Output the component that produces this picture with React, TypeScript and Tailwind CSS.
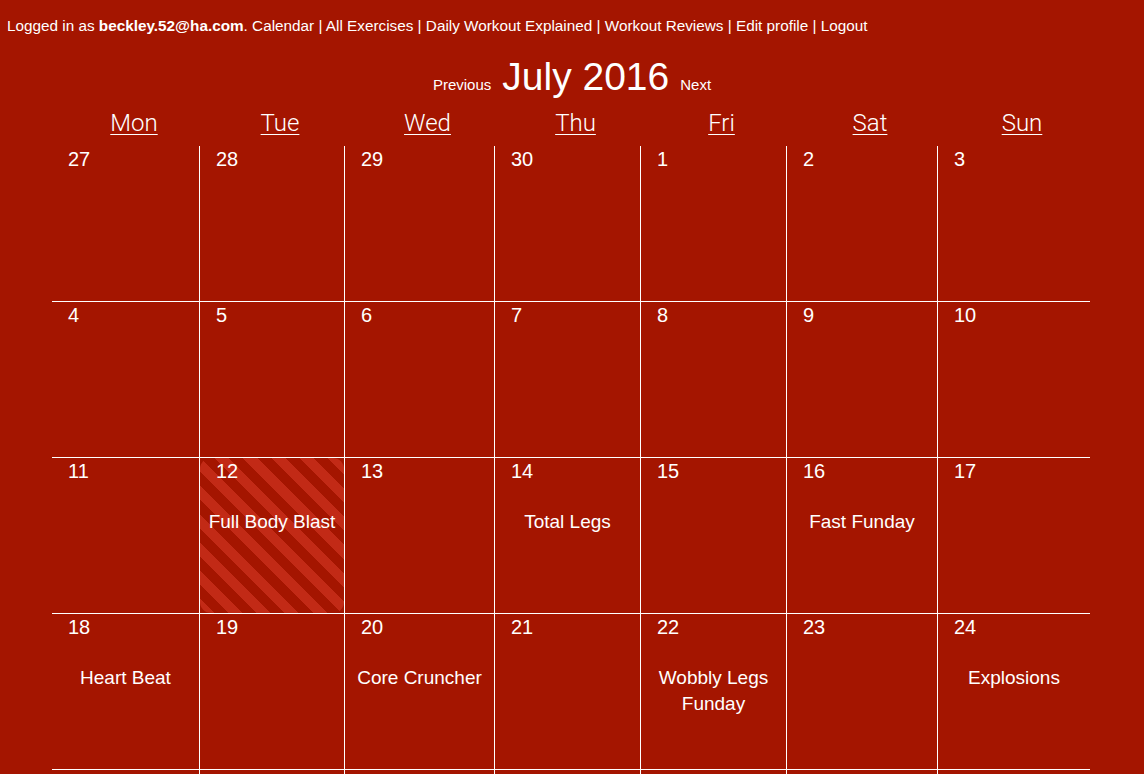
import React from 'react';

type Day = {
  day: number;
  workout?: string;
  today?: boolean;
};

const days = ['Mon', 'Tue', 'Wed', 'Thu', 'Fri', 'Sat', 'Sun'];

const weeks: Day[][] = [
  [{ day: 27 }, { day: 28 }, { day: 29 }, { day: 30 }, { day: 1 }, { day: 2 }, { day: 3 }],
  [{ day: 4 }, { day: 5 }, { day: 6 }, { day: 7 }, { day: 8 }, { day: 9 }, { day: 10 }],
  [
    { day: 11 },
    { day: 12, workout: 'Full Body Blast', today: true },
    { day: 13 },
    { day: 14, workout: 'Total Legs' },
    { day: 15 },
    { day: 16, workout: 'Fast Funday' },
    { day: 17 },
  ],
  [
    { day: 18, workout: 'Heart Beat' },
    { day: 19 },
    { day: 20, workout: 'Core Cruncher' },
    { day: 21 },
    { day: 22, workout: 'Wobbly Legs Funday' },
    { day: 23 },
    { day: 24, workout: 'Explosions' },
  ],
  [{ day: 25 }, { day: 26 }, { day: 27 }, { day: 28 }, { day: 29 }, { day: 30 }, { day: 31 }],
];

const navLinks = ['Calendar', 'All Exercises', 'Daily Workout Explained', 'Workout Reviews', 'Edit profile', 'Logout'];

const cols = 'grid grid-cols-[147px_145px_150px_146px_146px_151px_153px]';

const DayCell: React.FC<{ d: Day; first: boolean }> = ({ d, first }) => {
  return (
    <div className={`h-[156px] border-b border-white ${first ? '' : 'border-l'}`}>
      <div
        className={`h-full pt-[1px] ${
          d.today
            ? 'rounded-[11px] bg-[image:repeating-linear-gradient(45deg,#c22a16_0px,#c22a16_10px,transparent_10px,transparent_20px)]'
            : ''
        }`}
      >
        <div className="pl-[16px] text-[20px] leading-[24px]">{d.day}</div>
        {d.workout && (
          <div className="mt-[26px] px-2 text-center text-[19px] leading-[26px]">{d.workout}</div>
        )}
      </div>
    </div>
  );
};

export default function App() {
  return (
    <div className="min-h-screen bg-[#a41500] text-white font-['Liberation_Sans',Arial,sans-serif]">
      {/* barra superior */}
      <div className="pl-[7px] pt-[14px] text-[15.3px] leading-[24px]">
        Logged in as <span className="font-bold">beckley.52@ha.com</span>.{' '}
        {navLinks.map((l, i) => (
          <span key={l}>
            <a href="#" className="cursor-pointer">
              {l}
            </a>
            {i < navLinks.length - 1 ? ' | ' : ''}
          </span>
        ))}
      </div>

      {/* mes */}
      <div className="mt-[17px] flex items-baseline justify-center gap-[11px]">
        <a href="#" className="text-[15px]">
          Previous
        </a>
        <h1 className="text-[39px] leading-[44px]">July 2016</h1>
        <a href="#" className="text-[15px]">
          Next
        </a>
      </div>

      <div className="ml-[52px] w-[1038px]">
        <div className={`${cols} mt-[10px] font-['Roboto',sans-serif] font-light text-[24px] leading-[28px]`}>
          {days.map((d) => (
            <div key={d} className="pl-[17px] text-center">
              <a href="#" className="underline underline-offset-[3px] decoration-1">
                {d}
              </a>
            </div>
          ))}
        </div>

        <div className={`${cols} mt-[9px]`}>
          {weeks.map((w, wi) =>
            w.map((d, di) => <DayCell key={`${wi}-${di}`} d={d} first={di === 0} />)
          )}
        </div>
      </div>
    </div>
  );
}
